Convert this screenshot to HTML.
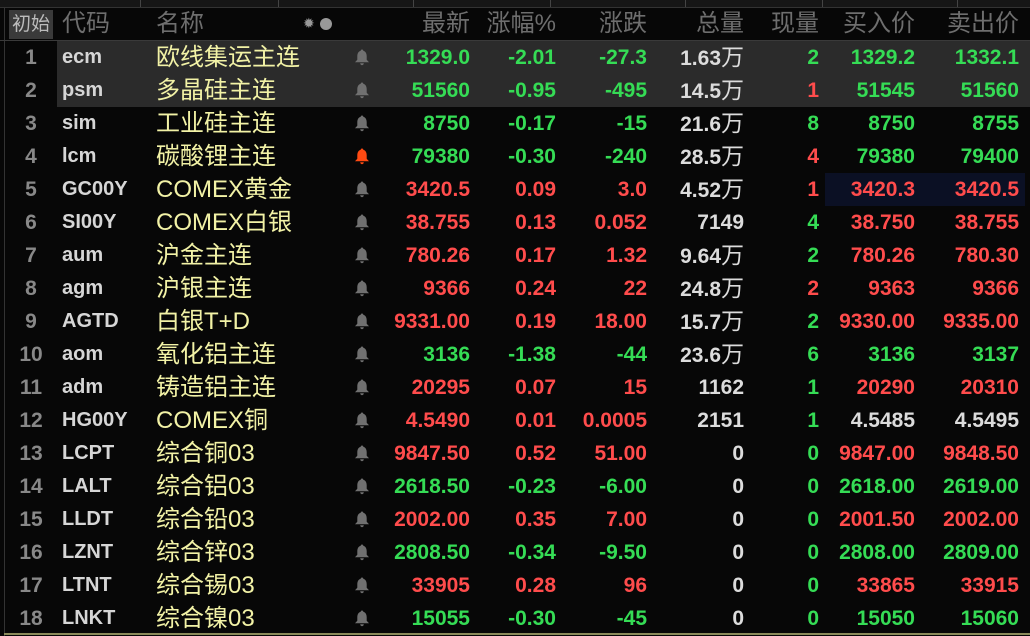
<!DOCTYPE html><html><head><meta charset="utf-8"><style>
body{margin:0;width:1030px;height:636px;background:#070707;overflow:hidden;font-family:"Liberation Sans","Noto Sans CJK SC",sans-serif;position:relative}
.top{position:absolute;left:0;top:0;width:1030px;height:7px;background:#161616;border-bottom:1px solid #333}
.top i{position:absolute;top:0;height:7px;width:1px;background:#444}
.hdr{position:absolute;top:8px;left:0;width:1030px;height:32px;border-bottom:1px solid #3a3a3a;color:#6e6e6e;font-size:24px}
.c{position:absolute;white-space:nowrap}
.r{position:absolute;left:0;width:1030px;height:33px;line-height:33px;font-size:21px;font-weight:bold}
.n{position:absolute;width:40px;left:11px;text-align:center;color:#888}
.cd{position:absolute;left:62px;color:#d6d6d6;font-size:20px}
.nm{position:absolute;left:156px;color:#f2f2a6;font-weight:normal;font-size:24px}
.b{position:absolute;left:354px;top:8px;width:16px;height:17px}
.v{position:absolute;text-align:right}
.g{color:#35dc55}.d{color:#ff4c4c}.w{color:#dcdcdc}
.wan{font-weight:normal;font-size:23px}
</style></head><body>
<div class="top"><i style="left:140px"></i><i style="left:278px"></i><i style="left:413px"></i><i style="left:550px"></i><i style="left:685px"></i><i style="left:822px"></i><i style="left:957px"></i></div>
<div style="position:absolute;left:4px;top:8px;width:1px;height:628px;background:#333"></div>
<div style="position:absolute;left:4px;top:633px;width:1026px;height:2px;background:#8a8a5a"></div>
<div class="hdr">
<div class="c" style="left:9px;top:2px;width:44px;height:29px;background:#3a3a3a;color:#bbb;font-size:19px;line-height:29px;text-align:center">初始</div>
<div class="c" style="left:62px;top:0;line-height:32px">代码</div>
<div class="c" style="left:156px;top:0;line-height:32px">名称</div>
<div class="c" style="left:303px;top:9px;width:12px;height:12px;color:#999;font-size:14px;line-height:12px">✹</div>
<div class="c" style="left:320px;top:10px;width:12px;height:12px;border-radius:50%;background:#999"></div>
<div class="c" style="right:560px;line-height:32px">最新</div>
<div class="c" style="right:474px;line-height:32px">涨幅%</div>
<div class="c" style="right:383px;line-height:32px">涨跌</div>
<div class="c" style="right:286px;line-height:32px">总量</div>
<div class="c" style="right:211px;line-height:32px">现量</div>
<div class="c" style="right:115px;line-height:32px">买入价</div>
<div class="c" style="right:11px;line-height:32px">卖出价</div>
</div>
<div style="position:absolute;left:57px;top:41px;width:973px;height:66px;background:#2b2b2b"></div>
<div style="position:absolute;left:825px;top:173px;width:200px;height:33px;background:#0b1024"></div>
<div id="rows"></div>
<script>
const d=[
["1","ecm","欧线集运主连","1329.0","-2.01","-27.3","1.63万","2","1329.2","1332.1","g","g","g","g","g"],
["2","psm","多晶硅主连","51560","-0.95","-495","14.5万","1","51545","51560","g","g","g","d","g"],
["3","sim","工业硅主连","8750","-0.17","-15","21.6万","8","8750","8755","g","g","g","g","g"],
["4","lcm","碳酸锂主连","79380","-0.30","-240","28.5万","4","79380","79400","g","g","g","d","g"],
["5","GC00Y","COMEX黄金","3420.5","0.09","3.0","4.52万","1","3420.3","3420.5","d","d","d","d","d"],
["6","SI00Y","COMEX白银","38.755","0.13","0.052","7149","4","38.750","38.755","d","d","d","g","d"],
["7","aum","沪金主连","780.26","0.17","1.32","9.64万","2","780.26","780.30","d","d","d","g","d"],
["8","agm","沪银主连","9366","0.24","22","24.8万","2","9363","9366","d","d","d","d","d"],
["9","AGTD","白银T+D","9331.00","0.19","18.00","15.7万","2","9330.00","9335.00","d","d","d","g","d"],
["10","aom","氧化铝主连","3136","-1.38","-44","23.6万","6","3136","3137","g","g","g","g","g"],
["11","adm","铸造铝主连","20295","0.07","15","1162","1","20290","20310","d","d","d","g","d"],
["12","HG00Y","COMEX铜","4.5490","0.01","0.0005","2151","1","4.5485","4.5495","d","d","d","g","w"],
["13","LCPT","综合铜03","9847.50","0.52","51.00","0","0","9847.00","9848.50","d","d","d","g","d"],
["14","LALT","综合铝03","2618.50","-0.23","-6.00","0","0","2618.00","2619.00","g","g","g","g","g"],
["15","LLDT","综合铅03","2002.00","0.35","7.00","0","0","2001.50","2002.00","d","d","d","g","d"],
["16","LZNT","综合锌03","2808.50","-0.34","-9.50","0","0","2808.00","2809.00","g","g","g","g","g"],
["17","LTNT","综合锡03","33905","0.28","96","0","0","33865","33915","d","d","d","g","d"],
["18","LNKT","综合镍03","15055","-0.30","-45","0","0","15050","15060","g","g","g","g","g"]];
let h="";
d.forEach((r,i)=>{const y=41+i*33;
const vol=r[6].endsWith("万")?r[6].slice(0,-1)+'<span class="wan">万</span>':r[6];
const bc=i==3?"#ff4a12":"#707070";
h+=`<div class="r" style="top:${y}px"><span class="n">${r[0]}</span><span class="cd">${r[1]}</span><span class="nm">${r[2]}</span><svg class="b" viewBox="0 0 16 17"><path fill="${bc}" d="M8 0.5c-.8 0-1.3.5-1.3 1.2C4.3 2.4 3.3 4.6 3.3 7.3v3.4L1 13.2h14l-2.3-2.5V7.3c0-2.7-1-4.9-3.4-5.6 0-.7-.5-1.2-1.3-1.2zM6.2 14.3h3.6c0 1-.8 1.9-1.8 1.9s-1.8-.9-1.8-1.9z"/></svg>
<span class="v ${r[10]}" style="right:560px">${r[3]}</span><span class="v ${r[11]}" style="right:474px">${r[4]}</span><span class="v ${r[12]}" style="right:383px">${r[5]}</span><span class="v w" style="right:286px">${vol}</span><span class="v ${r[13]}" style="right:211px">${r[7]}</span><span class="v ${r[14]}" style="right:115px">${r[8]}</span><span class="v ${r[14]}" style="right:11px">${r[9]}</span></div>`;});
document.getElementById("rows").innerHTML=h;
</script>
</body></html>
